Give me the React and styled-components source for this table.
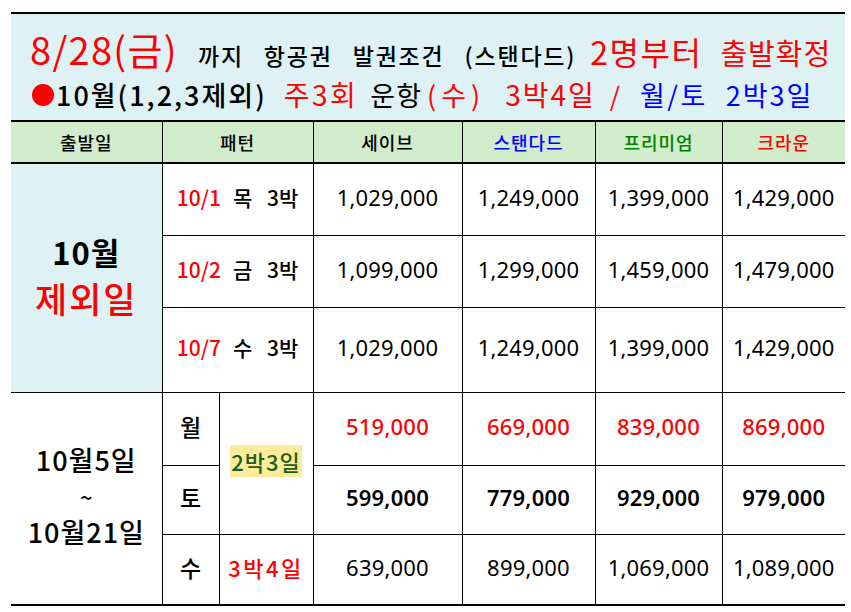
import React from "react";
import styled, { createGlobalStyle } from "styled-components";

const GlobalStyle = createGlobalStyle`
  body {
    margin: 0;
    background: #ffffff;
    font-family: "Noto Sans", "Noto Sans CJK KR", sans-serif;
  }
`;

const RED = "#ff0000";
const BLUE = "#0000ff";
const GREEN = "#008000";

const Page = styled.div`
  padding: 12px 6px 0 11px;
`;

const Notice = styled.div`
  width: 834px;
  height: 108px;
  box-sizing: border-box;
  border-top: 2px solid #000;
  background: #def2f5;
  padding: 15px 0 0 21px;
  color: #000;
`;

const Line = styled.div`
  display: flex;
  align-items: baseline;
  white-space: nowrap;
  line-height: ${(p) => p.$lh}px;
  margin: ${(p) => p.$mt || 0}px 0 0 ${(p) => p.$ml || 0}px;
`;

const Dot = styled.span`
  width: 22px;
  height: 22px;
  margin: 0 2px -2px 0;
  border-radius: 50%;
  background: ${RED};
`;

const Txt = styled.span`
  font-family: "Noto Sans CJK KR", sans-serif;
  font-size: ${(p) => p.$size}px;
  font-weight: ${(p) => p.$weight || 500};
  color: ${(p) => p.$color || "#000"};
  margin-right: ${(p) => p.$gap || 0}px;
  letter-spacing: ${(p) => p.$ls || 0}px;
  word-spacing: ${(p) => p.$ws || 0}px;
`;

const Table = styled.table`
  width: 834px;
  table-layout: fixed;
  border-collapse: collapse;
  border-bottom: 2px solid #000;
`;

const HeadCell = styled.th`
  height: 40px;
  padding: 0;
  background: #d0ecca;
  border-top: 2px solid #000;
  border-bottom: 2px solid #000;
  border-left: 1px solid #000;
  &:first-child {
    border-left: none;
  }
  font-family: "Noto Sans CJK KR", sans-serif;
  font-size: 18px;
  letter-spacing: 1px;
  font-weight: 500;
  color: ${(p) => p.$color || "#000"};
`;

const Cell = styled.td`
  box-sizing: border-box;
  height: ${(p) => p.$h}px;
  padding: 0 0 5px;
  border: 1px solid #000;
  text-align: center;
  vertical-align: middle;
  background: ${(p) => p.$bg || "#fff"};
  &:first-child {
    border-left: none;
  }
  &:last-child {
    border-right: none;
  }
`;

const Price = styled.span`
  font-family: "Noto Sans", sans-serif;
  font-size: 22px;
  letter-spacing: 0.2px;
  font-weight: ${(p) => p.$weight || 400};
  color: ${(p) => p.$color || "#000"};
`;

const Pattern = styled.span`
  font-family: "Noto Sans CJK KR", sans-serif;
  font-size: ${(p) => p.$size || 21}px;
  font-weight: 500;
  letter-spacing: ${(p) => p.$ls || 0}px;
  word-spacing: 10px;
  margin-right: ${(p) => p.$gap || 0}px;
  color: ${(p) => p.$color || "#000"};
`;

const Highlight = styled.span`
  font-family: "Noto Sans CJK KR", sans-serif;
  font-size: 22px;
  font-weight: 500;
  letter-spacing: 1px;
  color: #1b5e20;
  background: #fcec9a;
  padding: 0 1px;
`;

const GroupLabel = styled.div`
  display: flex;
  flex-direction: column;
  align-items: center;
  line-height: ${(p) => p.$lh}px;
`;

const firstGroup = [
  { date: "10/1", day: "목 3박", prices: ["1,029,000", "1,249,000", "1,399,000", "1,429,000"], h: 72 },
  { date: "10/2", day: "금 3박", prices: ["1,099,000", "1,299,000", "1,459,000", "1,479,000"], h: 72 },
  { date: "10/7", day: "수 3박", prices: ["1,029,000", "1,249,000", "1,399,000", "1,429,000"], h: 85 },
];

export default function App() {
  return (
    <Page>
      <GlobalStyle />
      <Notice>
        <Line $lh={40} $ml={-2}>
          <Txt $size={38} $weight={400} $color={RED} $ls={1.3} $gap={20}>8/28(금)</Txt>
          <Txt $size={23} $ls={1.8} $ws={13} $gap={14}>까지 항공권 발권조건 (스탠다드)</Txt>
          <Txt $size={32} $weight={400} $color={RED} $ls={1.5} $gap={18}>2명부터</Txt>
          <Txt $size={29} $weight={400} $color={RED} $ls={1}>출발확정</Txt>
        </Line>
        <Line $lh={28} $mt={5}>
          <Dot />
          <Txt $size={27} $ls={2} $gap={17}>10월(1,2,3제외)</Txt>
          <Txt $size={28} $weight={400} $color={RED} $ls={2.5} $gap={12}>주3회</Txt>
          <Txt $size={27} $weight={400} $ls={1} $gap={5}>운항</Txt>
          <Txt $size={27} $weight={400} $color={RED} $ls={5} $gap={20}>(수)</Txt>
          <Txt $size={28} $weight={400} $color={RED} $ls={2} $gap={14}>3박4일</Txt>
          <Txt $size={26} $weight={400} $color={RED} $gap={20}>/</Txt>
          <Txt $size={27} $weight={400} $color={BLUE} $ls={2.5} $gap={18}>월/토</Txt>
          <Txt $size={27} $weight={400} $color={BLUE} $ls={2}>2박3일</Txt>
        </Line>
      </Notice>
      <Table>
        <colgroup>
          <col style={{ width: 151 }} />
          <col style={{ width: 57 }} />
          <col style={{ width: 94 }} />
          <col style={{ width: 149 }} />
          <col style={{ width: 133 }} />
          <col style={{ width: 127 }} />
          <col style={{ width: 123 }} />
        </colgroup>
        <thead>
          <tr>
            <HeadCell>출발일</HeadCell>
            <HeadCell colSpan={2}>패턴</HeadCell>
            <HeadCell>세이브</HeadCell>
            <HeadCell $color={BLUE}>스탠다드</HeadCell>
            <HeadCell $color={GREEN}>프리미엄</HeadCell>
            <HeadCell $color={RED}>크라운</HeadCell>
          </tr>
        </thead>
        <tbody>
          {firstGroup.map((row, i) => (
            <tr key={row.date}>
              {i === 0 && (
                <Cell rowSpan={3} $bg="#def2f5">
                  <GroupLabel $lh={46}>
                    <Txt $size={31} $weight={700} $ls={1}>10월</Txt>
                    <Txt $size={35} $weight={500} $color={RED} $ls={2}>제외일</Txt>
                  </GroupLabel>
                </Cell>
              )}
              <Cell colSpan={2} $h={row.h}>
                <Pattern $color={RED} $gap={12}>{row.date}</Pattern>
                <Pattern>{row.day}</Pattern>
              </Cell>
              {row.prices.map((p, j) => (
                <Cell key={j}>
                  <Price>{p}</Price>
                </Cell>
              ))}
            </tr>
          ))}
          <tr>
            <Cell rowSpan={3}>
              <GroupLabel $lh={36}>
                <Txt $size={27} $ls={1}>10월5일</Txt>
                <Txt $size={22}>~</Txt>
                <Txt $size={27} $ls={1}>10월21일</Txt>
              </GroupLabel>
            </Cell>
            <Cell $h={73}>
              <Pattern $size={23}>월</Pattern>
            </Cell>
            <Cell rowSpan={2}>
              <Highlight>2박3일</Highlight>
            </Cell>
            {["519,000", "669,000", "839,000", "869,000"].map((p) => (
              <Cell key={p}>
                <Price $color={RED} $weight={500}>{p}</Price>
              </Cell>
            ))}
          </tr>
          <tr>
            <Cell $h={69}>
              <Pattern $size={23}>토</Pattern>
            </Cell>
            {["599,000", "779,000", "929,000", "979,000"].map((p) => (
              <Cell key={p}>
                <Price $weight={600}>{p}</Price>
              </Cell>
            ))}
          </tr>
          <tr>
            <Cell $h={71}>
              <Pattern $size={23}>수</Pattern>
            </Cell>
            <Cell>
              <Pattern $size={22} $ls={2.5} $color={RED}>3박4일</Pattern>
            </Cell>
            {["639,000", "899,000", "1,069,000", "1,089,000"].map((p) => (
              <Cell key={p}>
                <Price>{p}</Price>
              </Cell>
            ))}
          </tr>
        </tbody>
      </Table>
    </Page>
  );
}
